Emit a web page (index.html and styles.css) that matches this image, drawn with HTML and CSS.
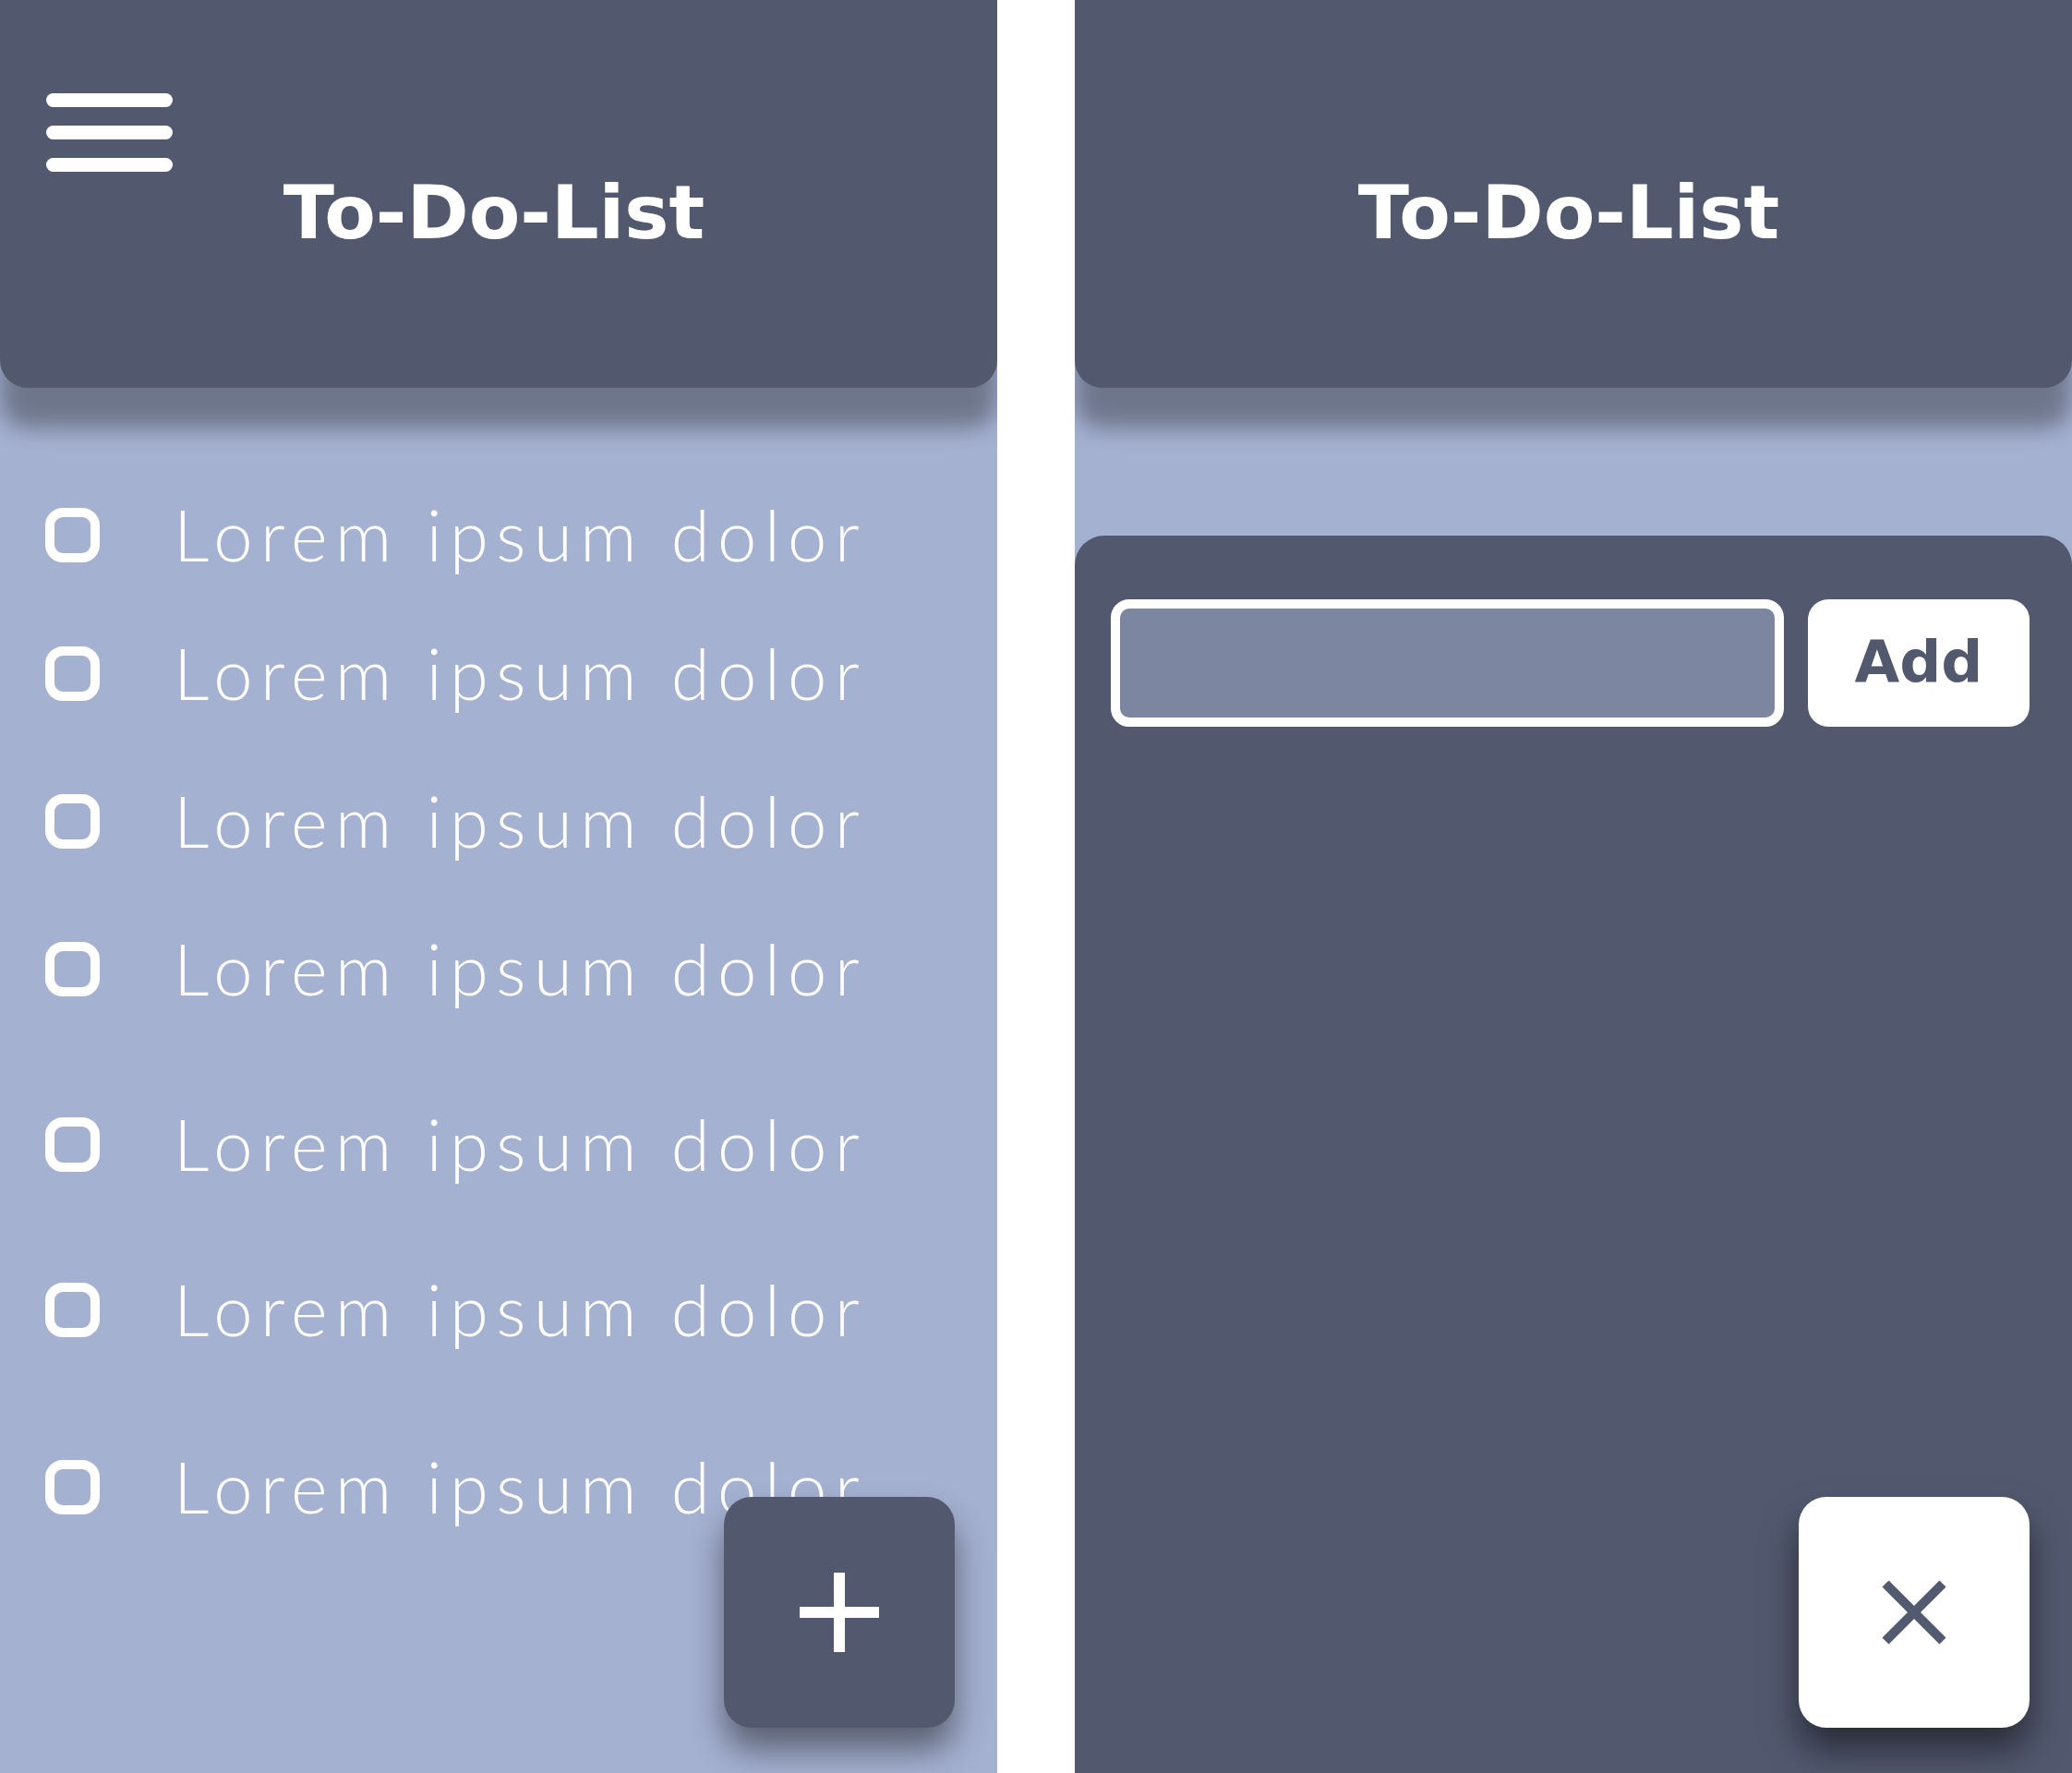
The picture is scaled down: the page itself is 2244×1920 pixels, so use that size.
FILE: index.html
```html
<!DOCTYPE html>
<html lang="en">
<head>
<meta charset="utf-8">
<title>To-Do-List</title>
<link rel="stylesheet" href="styles.css">
</head>
<body>
  <div class="screen">
    <header class="appbar appbar--menu">
      <div class="menu" aria-label="Menu"><span></span><span></span><span></span></div>
      <h1 class="title">To-Do-List</h1>
    </header>
    <ul class="tasks">
      <li class="task"><span class="check"></span><span class="label">Lorem ipsum dolor</span></li>
      <li class="task"><span class="check"></span><span class="label">Lorem ipsum dolor</span></li>
      <li class="task"><span class="check"></span><span class="label">Lorem ipsum dolor</span></li>
      <li class="task"><span class="check"></span><span class="label">Lorem ipsum dolor</span></li>
      <li class="task"><span class="check"></span><span class="label">Lorem ipsum dolor</span></li>
      <li class="task"><span class="check"></span><span class="label">Lorem ipsum dolor</span></li>
      <li class="task"><span class="check"></span><span class="label">Lorem ipsum dolor</span></li>
    </ul>
    <button class="fab fab--add" aria-label="Add task">
      <svg width="86" height="86" viewBox="0 0 86 86"><path d="M43 0V86M0 43H86" stroke="#ffffff" stroke-width="12" fill="none"/></svg>
    </button>
  </div>
  <div class="screen">
    <header class="appbar appbar--plain">
      <h1 class="title">To-Do-List</h1>
    </header>
    <section class="sheet">
      <form class="add-form">
        <input class="task-input" type="text" aria-label="New task">
        <button class="add-btn" type="button">Add</button>
      </form>
      <button class="fab fab--close" aria-label="Close">
        <svg width="70" height="70" viewBox="0 0 70 70"><path d="M4 4L66 66M66 4L4 66" stroke="#525a70" stroke-width="10" fill="none"/></svg>
      </button>
    </section>
  </div>
</body>
</html>
```

FILE: styles.css
```css
* { box-sizing: border-box; }

html, body {
  margin: 0;
  padding: 0;
}

body {
  width: 2244px;
  height: 1920px;
  background: #ffffff;
  display: flex;
  gap: 84px;
  overflow: hidden;
  font-family: "Lato", "DejaVu Sans", sans-serif;
}

.screen {
  position: relative;
  width: 1080px;
  height: 1920px;
  background: #a5b1d1;
  overflow: hidden;
  display: flex;
  flex-direction: column;
}

.appbar {
  position: relative;
  z-index: 1;
  height: 420px;
  flex: none;
  background: #52596f;
  border-radius: 0 0 30px 30px;
  box-shadow: 0 44px 24px rgba(0, 0, 0, 0.33);
}

.appbar--menu { padding-top: 101px; }
.appbar--plain { padding-top: 190px; }

.menu {
  margin-left: 50px;
  width: 137px;
  display: flex;
  flex-direction: column;
  gap: 20px;
}

.menu span {
  display: block;
  height: 15px;
  background: #ffffff;
  border-radius: 8px;
}

.title {
  margin: 4px 0 0;
  font-family: "DejaVu Sans", sans-serif;
  font-weight: bold;
  font-size: 81px;
  line-height: 1;
  color: #ffffff;
  text-align: center;
  padding-right: 10px;
}

.appbar--plain .title { margin-top: 0; }

.tasks {
  list-style: none;
  margin: 0;
  padding: 129px 0 0 49px;
}

.task {
  display: flex;
  align-items: center;
  height: 60px;
  gap: 80px;
}

.task:nth-child(2) { margin-top: 90px; }
.task:nth-child(3) { margin-top: 100px; }
.task:nth-child(4) { margin-top: 100px; }
.task:nth-child(5) { margin-top: 130px; }
.task:nth-child(6) { margin-top: 119px; }
.task:nth-child(7) { margin-top: 132px; }

.check {
  flex: none;
  width: 59px;
  height: 59px;
  border: 10px solid #ffffff;
  border-radius: 19px;
}

.label {
  font-family: "Lato", sans-serif;
  font-weight: 300;
  font-size: 76px;
  line-height: 1;
  letter-spacing: 8.4px;
  color: #ffffff;
  white-space: nowrap;
}

.fab {
  position: absolute;
  right: 46px;
  bottom: 49px;
  width: 250px;
  height: 250px;
  border: 0;
  padding: 0;
  border-radius: 30px;
  display: flex;
  align-items: center;
  justify-content: center;
}

.fab svg { display: block; }

.fab--add {
  background: #52596f;
  box-shadow: 0 24px 36px rgba(0, 0, 0, 0.45);
}

.fab--close {
  background: #ffffff;
  box-shadow: 0 24px 38px rgba(0, 0, 0, 0.5);
}

.sheet {
  flex: 1;
  margin-top: 160px;
  background: #52596f;
  border-radius: 32px 32px 0 0;
}

.add-form {
  display: flex;
  gap: 26px;
  padding: 69px 46px 0 39px;
}

.task-input {
  width: 729px;
  height: 138px;
  border: 10px solid #ffffff;
  border-radius: 20px;
  background: #7c86a0;
  outline: none;
  margin: 0;
}

.add-btn {
  width: 240px;
  height: 138px;
  border: 0;
  border-radius: 22px;
  background: #ffffff;
  color: #52596f;
  font-family: "DejaVu Sans", sans-serif;
  font-weight: bold;
  font-size: 63px;
  line-height: 1;
  padding: 0 0 4px;
  margin: 0;
}
```
